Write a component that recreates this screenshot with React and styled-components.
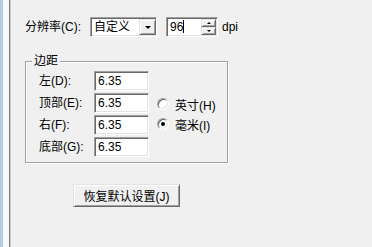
import React from "react";
import styled, { createGlobalStyle } from "styled-components";

const GlobalStyle = createGlobalStyle`
  html, body {
    margin: 0;
    padding: 0;
    background: #f0f0f0;
  }
  body {
    font-family: "Liberation Sans", "Noto Sans CJK SC", sans-serif;
    font-size: 12px;
    color: #000;
  }
`;

const Page = styled.div`
  display: flex;
  width: 372px;
  height: 247px;
  overflow: hidden;
  background: #f0f0f0;
`;

const LeftEdge = styled.div`
  width: 6px;
  border-left: 3px solid #b4cbe6;
  border-right: 1px solid #7f7f7f;
  background: #f6f8fb;
  box-shadow: 1px 0 0 #c8c8c8;
`;

const Content = styled.div`
  flex: 1;
  padding: 17px 0 0 15px;
`;

const TopRow = styled.div`
  display: flex;
  align-items: center;
  height: 20px;
`;

const RowLabel = styled.span`
  width: ${(p) => p.$w}px;
  line-height: 20px;
  white-space: nowrap;
`;

const Sunken = styled.div`
  box-sizing: border-box;
  display: flex;
  align-items: center;
  width: ${(p) => p.$w}px;
  height: 20px;
  background: #fff;
  border: 1px solid;
  border-color: #a0a0a0 #ffffff #ffffff #a0a0a0;
  box-shadow: inset 1px 1px 0 #696969, inset -1px -1px 0 #e3e3e3;
  padding: 2px 2px 2px 3px;
`;

const FieldText = styled.span`
  flex: 1;
  line-height: 16px;
  white-space: nowrap;
`;

const Caret = styled.span`
  display: inline-block;
  width: 1px;
  height: 13px;
  background: #000;
  vertical-align: -2px;
`;

const Raised = styled.div`
  box-sizing: border-box;
  display: flex;
  align-items: center;
  justify-content: center;
  background: #f0f0f0;
  border: 1px solid;
  border-color: #e3e3e3 #696969 #696969 #e3e3e3;
  box-shadow: inset 1px 1px 0 #ffffff, inset -1px -1px 0 #a0a0a0;
`;

const DropButton = styled(Raised)`
  width: 17px;
  height: 16px;
  margin-right: -2px;
`;

const SpinButtons = styled.div`
  display: flex;
  flex-direction: column;
  width: 15px;
  height: 16px;
  margin-right: -1px;
`;

const SpinHalf = styled(Raised)`
  flex: 1;
`;

const Arrow = styled.span`
  width: 0;
  height: 0;
  border-left: ${(p) => p.$s}px solid transparent;
  border-right: ${(p) => p.$s}px solid transparent;
  ${(p) => (p.$up ? "border-bottom" : "border-top")}: ${(p) => p.$s}px solid #000;
`;

const Unit = styled.span`
  margin-left: 4px;
  line-height: 20px;
`;

const Gap = styled.span`
  width: ${(p) => p.$w}px;
`;

const GroupBox = styled.div`
  position: relative;
  box-sizing: border-box;
  width: 203px;
  margin-top: 24px;
  border: 1px solid #a0a0a0;
  box-shadow: inset 1px 1px 0 #ffffff, 1px 1px 0 #ffffff;
  padding: 9px 0 5px 13px;
  display: flex;
`;

const Legend = styled.span`
  position: absolute;
  top: -9px;
  left: 6px;
  padding: 0 2px;
  background: #f0f0f0;
  line-height: 16px;
`;

const FieldGrid = styled.div`
  display: grid;
  grid-template-columns: 55px 55px;
  grid-auto-rows: 20px;
  row-gap: 2px;
`;

const GridLabel = styled.span`
  line-height: 20px;
  white-space: nowrap;
`;

const RadioColumn = styled.div`
  display: flex;
  flex-direction: column;
  gap: 4px;
  margin: 25px 0 0 8px;
`;

const RadioRow = styled.label`
  display: flex;
  align-items: center;
  height: 16px;
  white-space: nowrap;
`;

const RadioDot = styled.span`
  box-sizing: border-box;
  display: flex;
  align-items: center;
  justify-content: center;
  width: 12px;
  height: 12px;
  margin-right: 6px;
  border-radius: 50%;
  background: #fff;
  border: 1px solid;
  border-color: #a0a0a0 #ffffff #ffffff #a0a0a0;
  box-shadow: inset 1px 1px 0 #696969, inset -1px -1px 0 #e3e3e3;

  &::after {
    content: "";
    width: 4px;
    height: 4px;
    border-radius: 50%;
    background: ${(p) => (p.$on ? "#000" : "transparent")};
  }
`;

const ResetButton = styled(Raised)`
  width: 107px;
  height: 23px;
  margin: 21px 0 0 48px;
  font: inherit;
  color: #000;
  padding: 0;
`;

const fields = [
  ["左(D):", "6.35"],
  ["顶部(E):", "6.35"],
  ["右(F):", "6.35"],
  ["底部(G):", "6.35"],
];

export default function App() {
  return (
    <>
      <GlobalStyle />
      <Page>
        <LeftEdge />
        <Content>
          <TopRow>
            <RowLabel $w={65}>分辨率(C):</RowLabel>
            <Sunken $w={67}>
              <FieldText>自定义</FieldText>
              <DropButton>
                <Arrow $s={3} />
              </DropButton>
            </Sunken>
            <Gap $w={9} />
            <Sunken $w={52}>
              <FieldText>
                96
                <Caret />
              </FieldText>
              <SpinButtons>
                <SpinHalf>
                  <Arrow $s={2} $up />
                </SpinHalf>
                <SpinHalf>
                  <Arrow $s={2} />
                </SpinHalf>
              </SpinButtons>
            </Sunken>
            <Unit>dpi</Unit>
          </TopRow>

          <GroupBox>
            <Legend>边距</Legend>
            <FieldGrid>
              {fields.map(([label, value]) => (
                <React.Fragment key={label}>
                  <GridLabel>{label}</GridLabel>
                  <Sunken $w={55}>
                    <FieldText>{value}</FieldText>
                  </Sunken>
                </React.Fragment>
              ))}
            </FieldGrid>
            <RadioColumn>
              <RadioRow>
                <RadioDot />
                英寸(H)
              </RadioRow>
              <RadioRow>
                <RadioDot $on />
                毫米(I)
              </RadioRow>
            </RadioColumn>
          </GroupBox>

          <ResetButton as="button">恢复默认设置(J)</ResetButton>
        </Content>
      </Page>
    </>
  );
}
